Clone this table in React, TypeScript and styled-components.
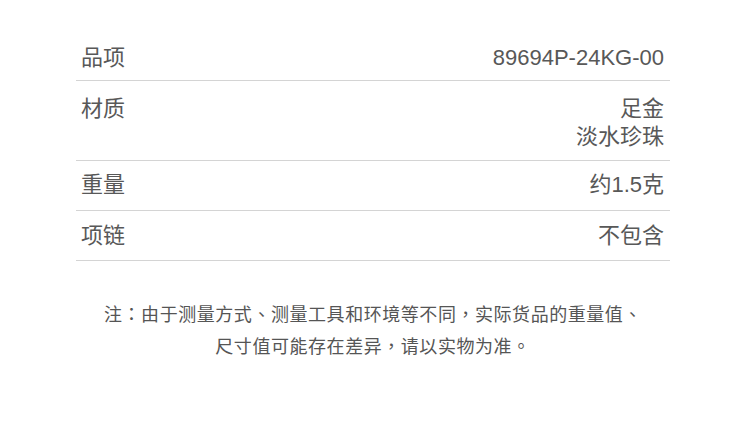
import styled, { createGlobalStyle } from "styled-components";

const GlobalStyle = createGlobalStyle`
  body {
    margin: 0;
    background: #ffffff;
    font-family: "Liberation Sans", "Noto Sans CJK SC", sans-serif;
    color: #555555;
  }
`;

const Page = styled.div`
  width: 750px;
  padding: 34px 80px 0 76px;
  box-sizing: border-box;
`;

const Table = styled.div`
  display: flex;
  flex-direction: column;
`;

const Row = styled.div<{ $pt: number; $pb: number }>`
  display: flex;
  justify-content: space-between;
  align-items: flex-start;
  padding: ${(p) => p.$pt}px 6px ${(p) => p.$pb}px 5px;
  border-bottom: 1px solid #d4d4d4;
  font-size: 22px;
  line-height: 28px;
`;

const Label = styled.span`
  color: #585858;
`;

const Value = styled.div`
  display: flex;
  flex-direction: column;
  align-items: flex-end;
  text-align: right;
  color: #585858;
`;

const Note = styled.p`
  margin: 36px 0 0;
  text-align: center;
  font-family: "Noto Sans CJK TC", sans-serif;
  font-size: 18px;
  line-height: 32px;
  letter-spacing: 0.55px;
  text-spacing-trim: space-all;
  color: #555555;
`;

const rows = [
  { label: "品项", value: ["89694P-24KG-00"], pt: 10, pb: 8 },
  { label: "材质", value: ["足金", "淡水珍珠"], pt: 14, pb: 9 },
  { label: "重量", value: ["约1.5克"], pt: 10, pb: 11 },
  { label: "项链", value: ["不包含"], pt: 11, pb: 10 },
];

export default function App() {
  return (
    <>
      <GlobalStyle />
      <Page>
        <Table>
          {rows.map((r) => (
            <Row key={r.label} $pt={r.pt} $pb={r.pb}>
              <Label>{r.label}</Label>
              <Value>
                {r.value.map((v) => (
                  <span key={v}>{v}</span>
                ))}
              </Value>
            </Row>
          ))}
        </Table>
        <Note>
          注：由于测量方式、测量工具和环境等不同，实际货品的重量值、
          <br />
          尺寸值可能存在差异，请以实物为准。
        </Note>
      </Page>
    </>
  );
}
